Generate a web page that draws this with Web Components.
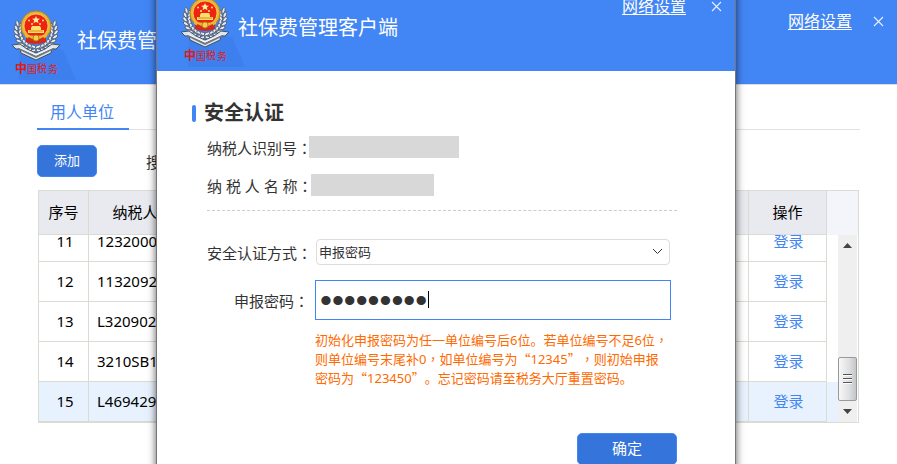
<!DOCTYPE html>
<html lang="zh-CN">
<head>
<meta charset="utf-8">
<title>社保费管理客户端</title>
<style>
html,body{margin:0;height:100%}
body{font-family:"Noto Sans","Noto Sans CJK SC",sans-serif;font-size:15px;color:#333;background:#fff;overflow:hidden;
--blue:#4285f4;--line:#d8dcd2}
</style>
</head>
<body>
<client-desktop></client-desktop>
<script>
function define(name, html, setup) {
  const tpl = document.createElement('template');
  tpl.innerHTML = html;
  customElements.define(name, class extends HTMLElement {
    constructor() {
      super();
      this.attachShadow({mode: 'open'}).append(tpl.content.cloneNode(true));
    }
    connectedCallback() { if (setup) setup(this, this.shadowRoot); }
  });
}

define('tax-emblem', `
<style>:host{display:block;flex:none;width:72px;height:84px}svg{display:block}text{font-family:"Noto Sans CJK SC",sans-serif;fill:#e01b12}</style>
<svg width="72" height="84" viewBox="0 0 72 84" role="img" aria-label="中国税务">
<path d="M12 42 55 50 68 80 11 80z" fill="#3e7fee"/>
<g id="wreath"></g>
<path d="M4 45l8-1 7 5 9 4 9-4 7-5 8 1-4 4-4 0-1 4-15 7-15-7-1-4-4 0z" fill="#dde3ea" stroke="#46505f"/>
<path d="M10 48l18 9 18-9" fill="none" stroke="#6e7885" stroke-width="2"/>
<path d="M10 47l18 8 18-8" fill="none" stroke="#fff"/>
<path d="M18 36h20v6q-10 4-20 0z" fill="#d5281c"/>
<circle cx="28" cy="26" r="15" fill="#e8b736" stroke="#b98416"/>
<circle cx="28" cy="26" r="12" fill="#ee2412" stroke="#f8d868" stroke-width=".8"/>
<path d="M28 16l1.100 2.500 2.800.2-2.100 1.800.7 2.700-2.500-1.400-2.500 1.400.7-2.700-2.100-1.800 2.800-.2z" fill="#fff0a0"/>
<g fill="#ffe06c"><circle cx="21" cy="20.500" r="1"/><circle cx="24" cy="24" r="1"/><circle cx="32" cy="24" r="1"/><circle cx="35" cy="20.500" r="1"/>
<path d="M23 28l1-2h8l1 2v2h3v3H20v-3h3z"/></g>
<path d="M21 31h14" stroke="#d58a12"/>
<path d="M17 34q11 4 22 0v3q-11 4-22 0z" fill="#e8b736"/>
<path d="M20 38l8 4 8-4" fill="none" stroke="#d5281c" stroke-width="2"/>
<circle cx="28" cy="38" r="3" fill="#f6cf4a" stroke="#b98416"/>
<text x="7" y="73" font-size="12" font-weight="700">中</text><text x="19" y="73" font-size="10">国</text><text x="29" y="72" font-size="10">税</text><text x="40" y="73" font-size="10">务</text>
</svg>`, (host, root) => {
  const g = root.getElementById('wreath');
  let s = '';
  for (let i = 0; i < 9; i++) {
    const t = (68 + i * 13) * Math.PI / 180;
    for (const side of [-1, 1]) for (const [r, tilt] of [[20, 35], [16, -15]]) {
      const x = 28 + side * r * Math.sin(t), y = 31 - r * Math.cos(t);
      const a = side * (180 * t / Math.PI + tilt);
      s += `<ellipse cx="${x.toFixed(1)}" cy="${y.toFixed(1)}" rx="3" ry="1.500" transform="rotate(${a.toFixed(0)} ${x.toFixed(1)} ${y.toFixed(1)})" fill="#e6ebf2" stroke="#4b586c" stroke-width=".8"/>`;
    }
  }
  g.innerHTML = s;
});

define('title-bar', `
<style>
:host{display:flex;align-items:flex-start;height:84px;background:var(--blue);color:#fff;padding:0 11px 0 var(--logo-inset,8px)}
h1{margin:0;font-size:20px;font-weight:400;line-height:24px;padding-top:29px;margin-left:var(--title-gap,-3px);flex:1;white-space:nowrap}
nav{display:flex;gap:var(--nav-gap,18px);align-items:center;padding-top:var(--nav-top,11px)}
a{color:#fff;font-size:16px;line-height:20px;text-underline-offset:2px}
button{border:0;padding:0;background:none;width:16px;height:16px;display:grid;place-items:center;margin:0}
</style>
<tax-emblem></tax-emblem><h1><slot></slot></h1>
<nav><a href="#settings">网络设置</a><button type="button" aria-label="关闭"><svg width="11" height="11" viewBox="0 0 11 11"><path d="M1 1l9 9M10 1l-9 9" stroke="#e8f0ff" stroke-width="1.100"/></svg></button></nav>`);

define('action-button', `
<style>:host{display:block}button{font:inherit;font-size:var(--size,13px);line-height:28px;width:100%;height:32px;border:1px solid #4285f4;border-radius:5px;background:#3574da;color:#fff;padding:0 0 2px;display:block}</style>
<button type="button"><slot></slot></button>`);

define('scroll-rail', `
<style>
:host{display:flex;flex-direction:column;align-items:center;width:19px;background:#efefef}
svg{display:block;margin:8px 0}
.gap{flex:1}
.thumb{box-sizing:border-box;width:19px;height:44px;border:1px solid #999;border-radius:2px;background:linear-gradient(90deg,#f7f7f7,#dedfe1 60%,#c4c5c8);display:flex;flex-direction:column;justify-content:center;align-items:center;gap:2px}
i{width:9px;height:2px;background:linear-gradient(#555 50%,#fff 50%)}
</style>
<svg width="9" height="5"><path d="M0 5 4.500 0 9 5z" fill="#444"/></svg><div class="gap"></div>
<div class="thumb"><i></i><i></i><i></i></div>
<svg width="9" height="5"><path d="M0 0 4.500 5 9 0z" fill="#444"/></svg>`);

define('unit-table', `
<style>
:host{display:block;border:1px solid var(--line);color:#000;font-size:15px}
.head,.body{display:flex}
.head{background:#f4f5fa}
.body{height:187px;overflow:hidden;align-items:flex-end}
.body scroll-rail{align-self:stretch;margin-right:1px}
.rows{flex:1}
.head table{margin-right:31px}
table{border-collapse:separate;border-spacing:0;table-layout:fixed;width:100%}
th,td{padding:0 0 2px;border-right:1px solid var(--line);border-bottom:1px solid var(--line);box-sizing:border-box;white-space:nowrap;overflow:hidden}
th{height:44px;font-weight:400;background:#e9eaf0}
th:nth-child(2){padding-right:2px}
td{height:40px}
td:first-child{text-align:center;padding-left:3px}
td:nth-child(2){padding-left:8px}
td:nth-child(4){text-align:center;padding-left:2px}
td.pad{border:0}
.on{background:#e8f2fe}
a{color:var(--blue);text-decoration:none}
</style>
<div class="head"><table><colgroup><col style="width:50px"><col style="width:140px"><col><col style="width:78px"></colgroup>
<thead><tr><th>序号</th><th>纳税人识别号</th><th></th><th>操作</th></tr></thead></table></div>
<div class="body"><div class="rows"><table><colgroup><col style="width:50px"><col style="width:140px"><col><col style="width:78px"><col style="width:11px"></colgroup><tbody></tbody></table></div><scroll-rail></scroll-rail></div>`,
(host, root) => {
  root.querySelector('tbody').innerHTML = [['11','1232000'],['12','1132092'],['13','L320902'],['14','3210SB1'],['15','L469429']]
    .map(([n, id]) => `<tr class="${n === '15' ? 'on' : ''}"><td>${n}</td><td>${id}</td><td></td><td><a href="#login">登录</a></td><td class="pad"></td></tr>`).join('');
});

define('main-window', `
<style>
:host{display:block}
title-bar{border-bottom:1px solid #ddd}
main{padding:12px 38px 0}
.tabs{display:flex;border-bottom:1px solid #e2e2e2;margin:0 -1px}
.tabs a{color:var(--blue);text-decoration:none;font-size:16px;line-height:31px;padding:0 15px 0 13px;border-bottom:2px solid var(--blue);margin-bottom:-1px;flex:none}
.tools{display:flex;align-items:center;gap:49px;margin:15px 0 13px -1px}
.tools action-button{width:60px}
</style>
<title-bar>社保费管理客户端</title-bar>
<main><div class="tabs"><a href="#units">用人单位</a></div>
<div class="tools"><action-button>添加</action-button><span>搜</span></div>
<unit-table></unit-table></main>`);

define('auth-dialog', `
<style>
:host{display:block;background:#fff;border:1px solid #777;box-shadow:0 0 8px rgba(0,0,0,.65)}
title-bar{--logo-inset:20px;--title-gap:-11px;--nav-gap:22px;--nav-top:9px}
form{padding:29px 58px 0 35px}
h2{display:flex;align-items:center;gap:8px;font-size:20px;line-height:26px;margin:0 0 9px;color:#333}
h2::before{content:"";width:4px;height:17px;border-radius:2px;background:var(--blue)}
.in{padding-left:15px}
.info{display:flex;align-items:center;height:24px;margin-bottom:14px}
.info b{font-weight:400;width:102px;white-space:nowrap;flex:none}
.info + .info{margin-bottom:13px}
.info + .info b{width:104px}
.mask{height:22px;width:150px;background:#d8d8d8}
.mask.short{width:123px}
hr{border:0;border-top:1px dashed #ccc;margin:0 0 28px}
.field{display:grid;grid-template-columns:108px 1fr;align-items:center;margin-right:6px}
label{white-space:nowrap}
.c{font-family:"Noto Sans CJK TC",sans-serif}
.q{font-family:"Noto Sans CJK SC",sans-serif}
.c,.q{line-height:1px}
.sel,.pw{position:relative}
select{appearance:none;width:calc(100% - 2px);height:26px;margin-left:1px;border:1px solid #ddd;border-radius:4px;background:#fff;font:inherit;font-size:13px;color:#333;padding:0 2px;display:block}
.sel svg{position:absolute;right:8px;top:9px;pointer-events:none}
.pw{margin-top:15px}
.pwl{padding:15px 6px 0 0;text-align:right}
input{box-sizing:border-box;width:100%;height:40px;border:1px solid var(--blue);font:34px/36px "Liberation Sans",sans-serif;color:#333;padding:0 4px;outline:0;display:block;background:#fff}
.caret{position:absolute;left:113px;top:11px;width:1px;height:17px;background:#000}
p{grid-column:2;margin:11px 0 0;color:#ff6a00;font-size:13px;line-height:19px;white-space:nowrap;text-spacing-trim:space-all}
.go{display:flex;justify-content:flex-end}
.go action-button{width:100px;--size:15px;margin-top:45px}
</style>
<title-bar>社保费管理客户端</title-bar>
<form><h2>安全认证</h2><div class="in">
<div class="info"><b>纳税人识别号<span class="c" lang="zh-Hant">：</span></b><span class="mask"></span></div>
<div class="info"><b>纳 税 人 名 称<span class="c" lang="zh-Hant">：</span></b><span class="mask short"></span></div>
<hr>
<div class="field"><label for="mode">安全认证方式<span class="c" lang="zh-Hant">：</span></label>
<div class="sel"><select id="mode"><option>申报密码</option></select><svg width="11" height="7" viewBox="0 0 11 7"><path d="M1 1l4.500 4.500L10 1" fill="none" stroke="#333"/></svg></div>
<label class="pwl" for="pw">申报密码<span class="c" lang="zh-Hant">：</span></label>
<div class="pw"><input id="pw" type="password" value="123456789" autocomplete="off"><span class="caret"></span></div>
<p>初始化申报密码为任一单位编号后6位。若单位编号不足6位<span class="c" lang="zh-Hant">，</span><br>则单位编号末尾补0<span class="c" lang="zh-Hant">，</span>如单位编号为<span class="q">“</span>12345<span class="q">”</span><span class="c" lang="zh-Hant">，</span>则初始申报<br>密码为<span class="q">“</span>123450<span class="q">”</span>。忘记密码请至税务大厅重置密码。</p></div>
<div class="go"><action-button>确定</action-button></div>
</div></form>`);

define('client-desktop', `
<style>
:host{display:block;position:relative;height:100%;overflow:hidden}
auth-dialog{position:absolute;left:156px;right:161px;top:-14px;bottom:-20px}
</style>
<main-window></main-window><auth-dialog role="dialog"></auth-dialog>`);
</script>
</body>
</html>
